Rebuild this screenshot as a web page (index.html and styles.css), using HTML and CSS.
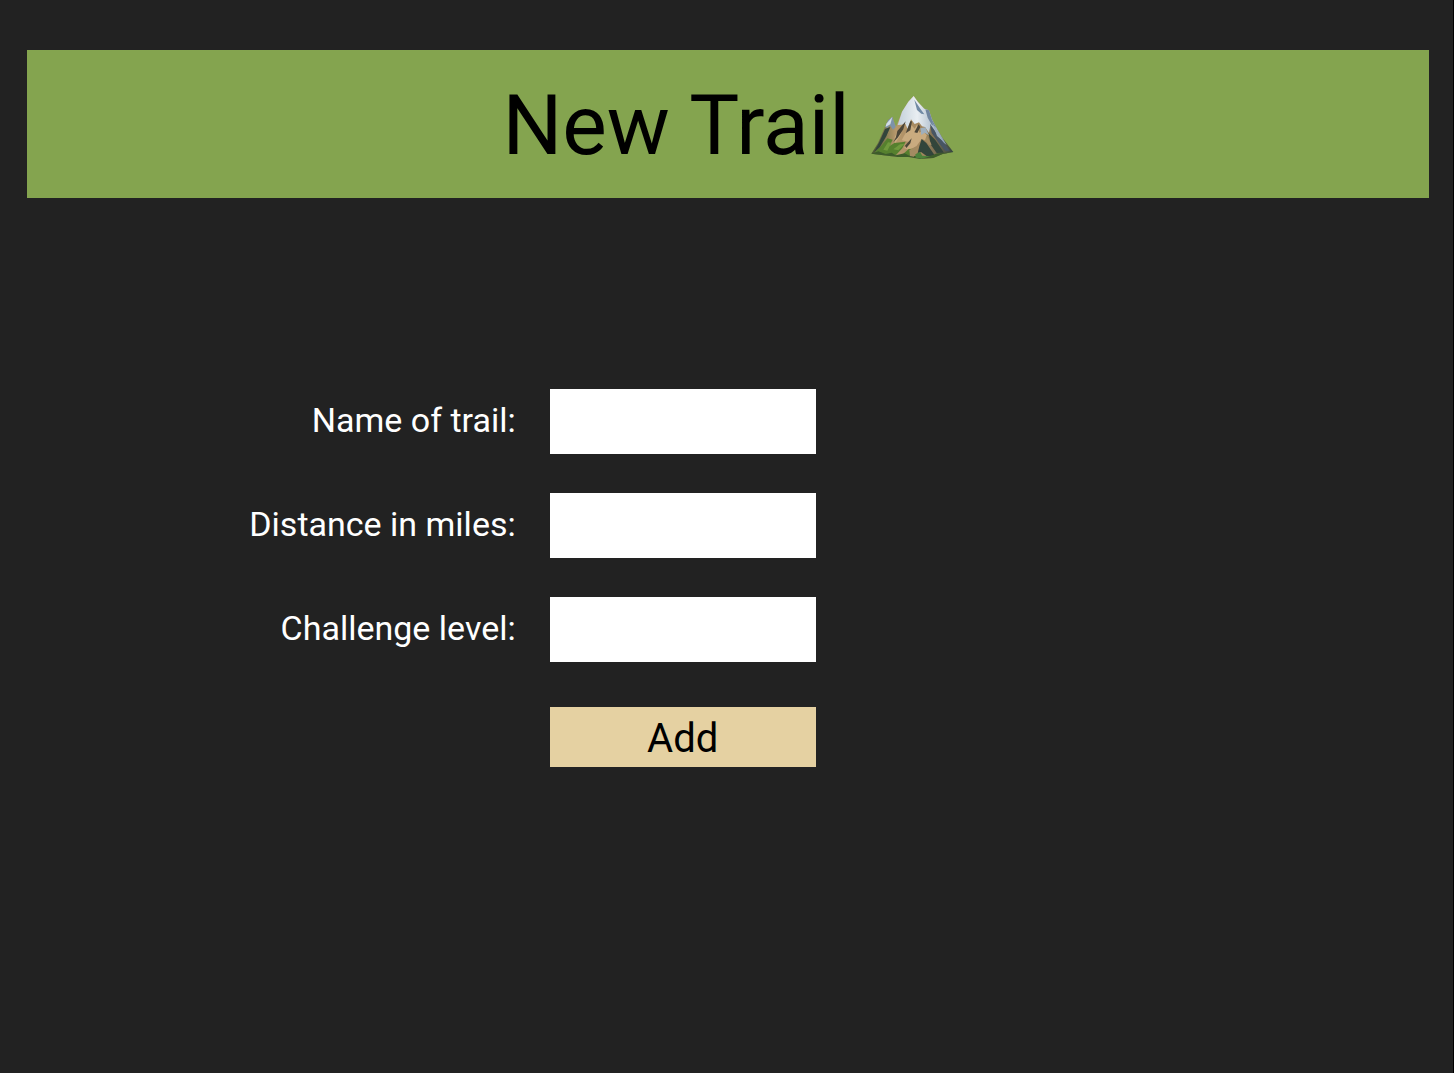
FILE: index.html
```html
<!DOCTYPE html>
<html lang="en">
<head>
<meta charset="utf-8">
<meta name="viewport" content="width=device-width, initial-scale=1">
<title>New Trail</title>
<link rel="stylesheet" href="styles.css">
</head>
<body>
<header class="banner">
  <h1 class="title">New Trail</h1>
  <svg class="mountain" viewBox="33 30 249 192" role="img" aria-label="Snow-capped mountain">
    <defs>
      <linearGradient id="rock" x1="0" y1="0" x2="1" y2="0">
        <stop offset="0" stop-color="#46572f"/>
        <stop offset=".3" stop-color="#b7986c"/>
        <stop offset=".65" stop-color="#a1855c"/>
        <stop offset="1" stop-color="#34453f"/>
      </linearGradient>
      <linearGradient id="snow" x1="0" y1="0" x2="1" y2="0">
        <stop offset="0" stop-color="#c3d0da"/>
        <stop offset=".4" stop-color="#e9eef2"/>
        <stop offset="1" stop-color="#8298ae"/>
      </linearGradient>
      <filter id="soft" x="-5%" y="-5%" width="110%" height="110%"><feGaussianBlur stdDeviation="2"/></filter>
    </defs>
    <g filter="url(#soft)">
      <path fill="url(#rock)" d="M34 206 54 174 75 125 84 105 97 95 108 125 126 80 145 50 161 33 174 51 193 71 207 76 216 103 231 131 247 158 280 201 248 207 220 219 180 222 145 216 112 216 70 211Z"/>
      <path fill="#7d93a9" d="M75 126 84 106 97 95 107 126 99 134 90 121 82 129Z"/>
      <path fill="#d3dde4" d="M79 116 97 96 91 118 77 125Z"/>
      <path fill="url(#snow)" d="M113 120 126 80 145 50 161 33 174 51 193 71 207 76 216 103 231 131 247 158 260 180 242 167 226 145 211 123 207 143 195 126 186 124 177 112 164 117 153 103 143 132 136 116 124 119Z"/>
      <path fill="#718aa4" d="M163 44 181 71 193 88 184 86 171 75Z"/>
      <path fill="#6f859e" d="M196 73 207 76 216 104 229 128 215 119 203 98Z"/>
      <path fill="#c9ab7f" d="M104 157 118 129 134 119 121 151 105 176ZM125 166 140 138 153 119 164 131 171 119 178 143 188 137 201 151 202 168 185 162 169 184 148 195 132 189 148 171Z"/>
      <path fill="#4b4538" d="M112 138 137 109 130 133 113 158 100 172 108 156ZM137 145 151 109 156 109 151 136ZM163 142 176 118 181 126 172 144ZM135 182 155 160 151 175 139 189Z"/>
      <path fill="#33443a" d="M75 132 91 126 79 154 58 188 42 201 58 171ZM185 162 199 174 225 212 205 217 183 201 173 205 178 184ZM205 143 226 165 252 203 230 204 213 180Z"/>
      <path fill="#465463" d="M210 116 237 155 270 197 256 198 235 172 215 144Z"/>
      <path fill="#9eafbd" d="M181 130 196 127 207 151 194 143 184 150ZM216 111 236 145 246 166 231 153Z"/>
      <path fill="#56802f" d="M44 202 66 181 82 160 98 164 88 184 103 174 137 170 127 190 106 212 67 210ZM126 210 146 192 158 191 155 215Z"/>
      <path fill="#70993d" d="M70 194 84 172 94 173 82 197ZM100 193 120 178 134 176 115 196Z"/>
      <path fill="#3d5b2c" d="M34 206 55 199 77 207 95 203 107 211 134 205 148 212 179 213 202 216 232 205 280 201 248 207 220 219 180 222 145 216 112 216Z"/>
      <path fill="#4d823a" d="M166 208 180 200 187 212 211 214 185 221 167 218Z"/>
      <path fill="#a38b62" d="M148 195 170 184 162 215 150 213ZM200 151 215 179 207 180 195 166Z"/>
    </g>
  </svg>
</header>
<main>
  <form class="trail-form">
    <div class="row">
      <label class="label" for="name">Name of trail:</label>
      <input class="field" id="name" type="text">
    </div>
    <div class="row">
      <label class="label" for="distance">Distance in miles:</label>
      <input class="field" id="distance" type="text">
    </div>
    <div class="row">
      <label class="label" for="challenge">Challenge level:</label>
      <input class="field" id="challenge" type="text">
    </div>
    <div class="row actions">
      <button class="add" type="button">Add</button>
    </div>
  </form>
</main>
</body>
</html>
```
FILE: styles.css
```css
* {
  box-sizing: border-box;
}

body {
  margin: 0;
  min-height: 100vh;
  padding: 50px 24px 50px 27px;
  border-right: 1px solid #000;
  background: #222;
  color: #fff;
  font-family: Roboto, "Liberation Sans", sans-serif;
}

.banner {
  display: flex;
  align-items: center;
  justify-content: center;
  gap: 21px;
  padding: 26px 24px 22px;
  background: #84a44f;
  color: #000;
}

.title {
  margin: 0;
  font-size: 84px;
  font-weight: 400;
  line-height: 100px;
}

.mountain {
  width: 83px;
  height: 64px;
  margin-top: 2px;
}

.trail-form {
  display: flex;
  flex-direction: column;
  gap: 39px;
  padding-top: 191px;
}

.row {
  display: grid;
  grid-template-columns: 35% 266px;
  column-gap: 32px;
  align-items: center;
}

.label {
  padding: 0 2px 4px 0;
  font-size: 34px;
  line-height: 40px;
  text-align: right;
}

.field {
  width: 100%;
  height: 65px;
  padding: 0 16px;
  border: 0;
  border-radius: 0;
  background: #fff;
  color: #000;
  font: inherit;
  font-size: 34px;
}

.actions {
  padding-top: 6px;
}

.add {
  grid-column: 2;
  height: 60px;
  padding: 4px 0 0;
  border: 0;
  background: #e5d1a2;
  color: #000;
  font: inherit;
  font-size: 40px;
  line-height: 56px;
}
```
